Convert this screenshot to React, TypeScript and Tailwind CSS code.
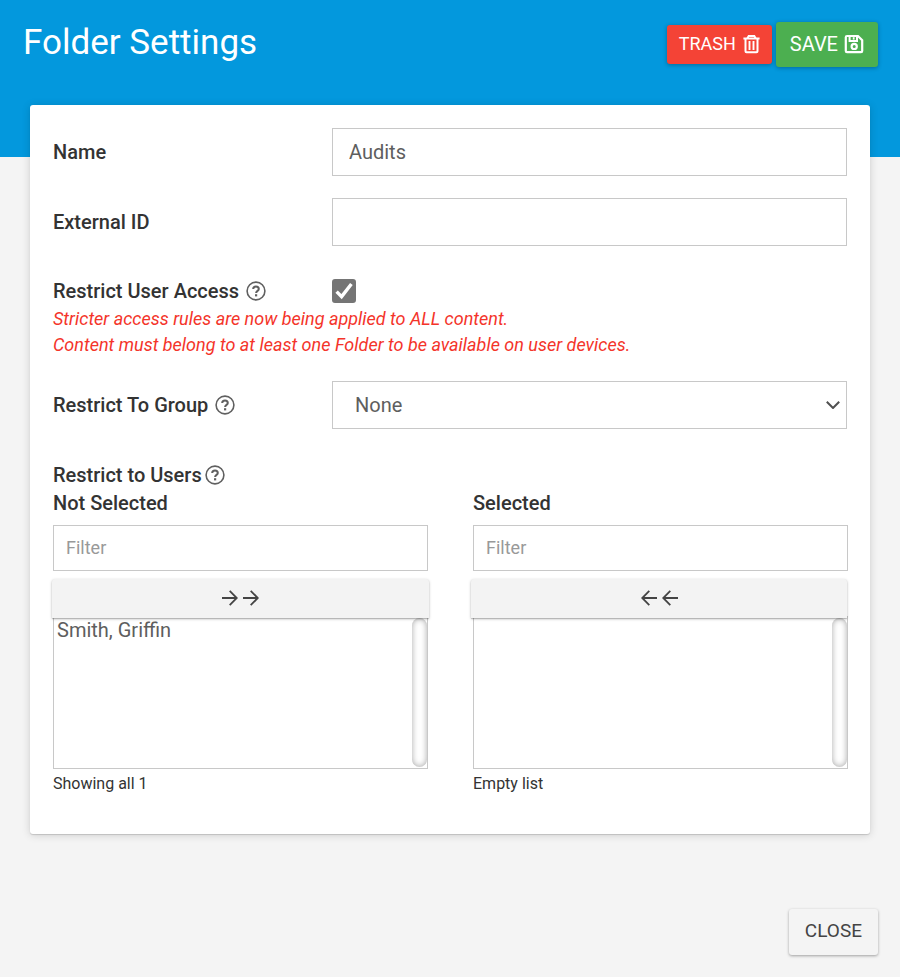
import React, { useState } from "react";

function HelpIcon() {
  return (
    <svg viewBox="0 0 20 20" className="size-5 shrink-0 text-[#606060]" fill="none" stroke="currentColor" role="img" aria-label="Help">
      <circle cx="10" cy="10" r="8.9" strokeWidth="1.6" />
      <path d="M7.200 8a2.800 2.600 0 0 1 5.600 0c0 1.900-2.700 1.900-2.700 4" strokeWidth="2" />
      <path d="M9 13.200h2.200v2.200H9z" fill="currentColor" stroke="none" />
    </svg>
  );
}

function TrashIcon() {
  return (
    <svg viewBox="0 0 17 20" className="h-5 w-[17px]" fill="none" stroke="currentColor" aria-hidden="true">
      <path d="M0.400 4.500h16.200" strokeWidth="2" />
      <path d="M4.400 4.200L5.700 2h5.600l1.300 2.200" strokeWidth="2" />
      <path d="M2.500 4.700v12.600a1 1 0 0 0 1 1h10a1 1 0 0 0 1-1V4.700" strokeWidth="2" />
      <path d="M6.500 7v9M10.500 7v9" strokeWidth="1.900" />
    </svg>
  );
}

function SaveIcon() {
  return (
    <svg viewBox="0 0 20 20" className="size-5" fill="none" stroke="currentColor" aria-hidden="true">
      <path d="M3 2h11l4.200 4.200V17a1.200 1.200 0 0 1-1.200 1.200H3A1.200 1.200 0 0 1 1.800 17V3.200A1.200 1.200 0 0 1 3 2z" strokeWidth="2.200" />
      <path d="M5.600 2v5h7.400V2" strokeWidth="2" />
      <path d="M9.700 3.200v2.400" strokeWidth="1.800" />
      <circle cx="10.200" cy="12.400" r="2.600" strokeWidth="2.200" />
    </svg>
  );
}

function ArrowIcon({ left = false }: { left?: boolean }) {
  return (
    <svg viewBox="0 0 16 16" className="size-4" fill="none" stroke="currentColor" strokeWidth="1.8" aria-hidden="true">
      {left ? <path d="M16 8H1.200M8.300 0.800L1.200 8l7.100 7.200" /> : <path d="M0 8h14.800M7.700 0.800L14.800 8l-7.100 7.200" />}
    </svg>
  );
}

const field = "block h-12 w-full rounded-none border border-[#c8c8c8] bg-white px-4 text-xl text-[#5e5e5e] outline-none";
const label = "flex items-center gap-[7px] text-xl font-medium";

type ListProps = { id: string; title: string; users: string[]; note: string; left?: boolean };

function UserList({ id, title, users, note, left = false }: ListProps) {
  return (
    <div>
      <label htmlFor={id} className="block text-xl leading-7 font-medium">{title}</label>
      <input
        type="text"
        placeholder="Filter"
        aria-label={`Filter ${title}`}
        className="mt-2 block h-[46px] w-full border border-[#c8c8c8] px-3 pb-[2px] text-lg outline-none placeholder:text-[#999]"
      />
      <div className={left ? "-ml-[2px] mr-px" : "-mx-px"}>
        <button
          type="button"
          aria-label={left ? "Remove all" : "Add all"}
          className="relative z-10 mt-2 flex h-[39px] w-full items-center justify-center gap-[5px] rounded-t-[3px] bg-[#f3f3f3] pb-[2px] text-[#444] shadow-[0_1px_3px_rgba(0,0,0,0.26),0_1px_1px_rgba(0,0,0,0.16)]"
        >
          <ArrowIcon left={left} />
          <ArrowIcon left={left} />
        </button>
      </div>
      <div className="relative -mt-[2px]">
        <select
          id={id}
          multiple
          className="block h-[153px] w-full overflow-hidden border border-[#c8c8c8] bg-white text-xl text-[#5e5e5e] outline-none"
        >
          {users.map((u) => (
            <option key={u} className="p-0 px-[3px] pt-px leading-7">{u}</option>
          ))}
        </select>
        <div className="pointer-events-none absolute top-[2px] right-px bottom-[2px] w-[15px] rounded-[10px] shadow-[inset_0_0_6px_rgba(0,0,0,0.35)]" />
      </div>
      <p className="mt-[3px] text-base leading-6">{note}</p>
    </div>
  );
}

export default function App() {
  const [restricted, setRestricted] = useState(true);
  return (
    <div className="min-h-screen bg-[#f4f4f4] font-[Roboto,sans-serif] text-[#333]">
      <header className="flex h-[157px] items-start justify-between bg-[#0398dd] pr-[22px] pl-[23px] text-white">
        <h1 className="mt-[17px] text-[35px] leading-[52px]">Folder Settings</h1>
        <div className="mt-[22px] flex items-center gap-1">
          <button type="button" className="flex h-[39px] items-center gap-[7px] rounded-[3px] bg-[#f44336] px-3 pb-[2px] text-lg shadow-[0_1px_4px_rgba(0,0,0,0.3)]">
            TRASH <TrashIcon />
          </button>
          <button type="button" className="flex h-[45px] items-center gap-[6px] rounded-[3px] bg-[#4caf50] px-[14px] pb-[2px] text-xl shadow-[0_1px_4px_rgba(0,0,0,0.3)]">
            SAVE <SaveIcon />
          </button>
        </div>
      </header>

      <main className="relative mx-[30px] -mt-[52px] rounded-[3px] bg-white px-[23px] pt-[23px] pb-[38px] shadow-[0_1px_8px_rgba(0,0,0,0.16),0_1px_1px_rgba(0,0,0,0.14)]">
        <div className="grid grid-cols-[279px_1fr] items-center gap-y-[22px]">
          <label htmlFor="name" className={label}>Name</label>
          <input id="name" type="text" defaultValue="Audits" className={field} />
          <label htmlFor="external" className={label}>External ID</label>
          <input id="external" type="text" className={field} />
        </div>

        <div className="mt-[31px] grid grid-cols-[279px_1fr] items-center">
          <label htmlFor="restrict" className={label}>Restrict User Access <HelpIcon /></label>
          <span className="relative block size-6">
            <input
              id="restrict"
              type="checkbox"
              checked={restricted}
              onChange={(e) => setRestricted(e.target.checked)}
              className="block size-6 appearance-none rounded-[3px] border-2 border-[#757575] checked:bg-[#757575]"
            />
            {restricted && (
              <svg viewBox="0 0 24 24" className="pointer-events-none absolute inset-0 size-6" fill="none" stroke="#fff" strokeWidth="3.4" aria-hidden="true">
                <path d="M4.600 12.600l5 5L19.400 5" />
              </svg>
            )}
          </span>
        </div>
        <p className="mt-px text-lg leading-[26px] text-[#f4342a] italic">
          Stricter access rules are now being applied to ALL content.
          <br />
          Content must belong to at least one Folder to be available on user devices.
        </p>

        <div className="mt-[23px] grid grid-cols-[279px_1fr] items-center">
          <label htmlFor="group" className={label}>Restrict To Group <HelpIcon /></label>
          <div className="relative">
            <select id="group" className={`${field} appearance-none pl-[22px]`}>
              <option>None</option>
            </select>
            <svg viewBox="0 0 14 8" className="pointer-events-none absolute top-5 right-[7px] h-2 w-[14px]" fill="none" stroke="#505050" strokeWidth="2" aria-hidden="true">
              <path d="M0.800 0.800L7 7l6.200-6.200" />
            </svg>
          </div>
        </div>

        <h2 className="mt-8 flex items-center gap-[3px] text-xl leading-7 font-medium">Restrict to Users <HelpIcon /></h2>
        <div className="-mr-px grid grid-cols-2 gap-[45px]">
          <UserList id="available" title="Not Selected" users={["Smith, Griffin"]} note="Showing all 1" />
          <UserList id="chosen" title="Selected" users={[]} note="Empty list" left />
        </div>
      </main>

      <div className="mt-[75px] flex justify-end px-[22px] pb-[22px]">
        <button type="button" className="h-[46px] rounded-[3px] bg-[#f4f4f4] px-4 pb-px text-[19px] text-[#444] shadow-[0_1px_3px_rgba(0,0,0,0.35)]">CLOSE</button>
      </div>
    </div>
  );
}
